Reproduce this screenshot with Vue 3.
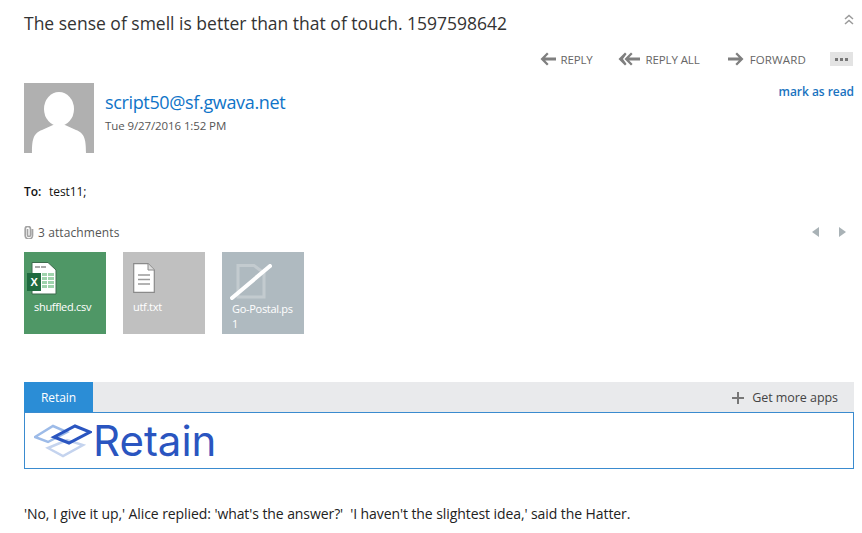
<template>
  <div class="page">
    <div class="subject-row">
      <h1 class="subject">The sense of smell is better than that of touch. 1597598642</h1>
      <svg class="collapse" width="10" height="12" viewBox="0 0 10 12" fill="none" stroke="#9a9a9a" stroke-width="1.5">
        <polyline points="1,5 5,1.5 9,5" />
        <polyline points="1,10 5,6.5 9,10" />
      </svg>
    </div>

    <div class="actions">
      <span class="action">
        <svg width="16" height="14" viewBox="0 0 16 14" fill="#7f7f7f"><path d="M7 0.5 L8.6 2 L5.2 5.5 H16 V8.5 H5.2 L8.6 12 L7 13.5 L0.5 7 Z" /></svg>
        REPLY
      </span>
      <span class="action wide">
        <svg width="22" height="14" viewBox="0 0 22 14" fill="#7f7f7f"><path d="M7 0.5 L8.6 2 L5 7 L8.6 12 L7 13.5 L0.5 7 Z" /><path d="M13 0.5 L14.6 2 L11.2 5.5 H22 V8.5 H11.2 L14.6 12 L13 13.5 L6.5 7 Z" /></svg>
        REPLY ALL
      </span>
      <span class="action last">
        <svg width="16" height="14" viewBox="0 0 16 14" fill="#7f7f7f"><path d="M9 0.5 L7.4 2 L10.8 5.5 H0 V8.5 H10.8 L7.4 12 L9 13.5 L15.5 7 Z" /></svg>
        FORWARD
      </span>
      <span class="more"><i></i><i></i><i></i></span>
    </div>

    <div class="sender-row">
      <svg class="avatar" width="70" height="70" viewBox="0 0 70 70">
        <rect width="70" height="70" fill="#b0b0b0" />
        <ellipse cx="35" cy="26" rx="15" ry="17" fill="#fff" />
        <path d="M8 70 C8 55 10 50 18 47 L29 42 H41 L52 47 C60 50 62 55 62 70 Z" fill="#fff" />
      </svg>
      <div class="sender">
        <a class="email">script50@sf.gwava.net</a>
        <div class="date">Tue 9/27/2016 1:52 PM</div>
      </div>
      <a class="mark">mark as read</a>
    </div>

    <div class="to"><b>To:</b><span>test11;</span></div>

    <div class="attach-head">
      <div class="attach-count">
        <svg width="10" height="13" viewBox="0 0 10 13" fill="none" stroke="#a3a3a3" stroke-width="1.7">
          <path d="M3.500 3 V9 A1.500 1.500 0 0 0 6.500 9 V3 A2.500 2.500 0 0 0 1.200 3 V9.500 A3.500 3.500 0 0 0 8.500 9.500 V3" />
        </svg>
        3 attachments
      </div>
      <div class="pager">
        <svg width="8" height="10" viewBox="0 0 8 10" fill="#a9b2b6"><path d="M7 0 V10 L0 5 Z" /></svg>
        <svg width="8" height="10" viewBox="0 0 8 10" fill="#a9b2b6"><path d="M1 0 V10 L8 5 Z" /></svg>
      </div>
    </div>

    <div class="tiles">
      <div v-for="file in files" :key="file.name" class="tile" :class="file.kind">
        <svg v-if="file.kind === 'csv'" class="icon" width="30" height="33" viewBox="0 0 30 33">
          <path d="M5 0.5 H21 L29 8 V32 H5 Z" fill="#fff" stroke="#3d6b4d" />
          <rect x="8" y="4" width="5" height="2" fill="#a9a9a9" />
          <rect x="14" y="4" width="5" height="2" fill="#a9a9a9" />
          <g fill="#9fd3ac">
            <rect x="15" y="11" width="5" height="3" /><rect x="21" y="11" width="6" height="3" />
            <rect x="15" y="15" width="5" height="3" /><rect x="21" y="15" width="6" height="3" />
            <rect x="15" y="19" width="5" height="3" /><rect x="21" y="19" width="6" height="3" />
            <rect x="15" y="23" width="5" height="3" /><rect x="21" y="23" width="6" height="3" />
          </g>
          <rect x="0" y="11" width="14" height="18" fill="#1f6a3f" />
          <text x="7" y="24" text-anchor="middle" class="x">X</text>
        </svg>
        <svg v-else-if="file.kind === 'txt'" class="icon" width="22" height="30" viewBox="0 0 22 30">
          <path d="M0.7 0.7 H15 L21.3 7 V29.3 H0.7 Z" fill="#fff" stroke="#8a8a8a" stroke-width="1.2" />
          <path d="M15 0.7 V7 H21.3" fill="#ddd" stroke="#8a8a8a" />
          <path d="M5 12 H17 M5 16.500 H17 M5 21 H17" stroke="#9a9a9a" stroke-width="1.6" />
        </svg>
        <svg v-else class="icon none" width="42" height="36" viewBox="0 0 42 36">
          <path d="M8 1.500 H24 L34 9 V33 H8 Z" fill="none" stroke="#c3cbcf" stroke-width="3" />
          <line x1="2" y1="34" x2="40" y2="2" stroke="#fff" stroke-width="4" stroke-linecap="round" />
        </svg>
        <div class="name">{{ file.name }}</div>
      </div>
    </div>

    <div class="app-bar">
      <span class="app-tab">Retain</span>
      <span class="more-apps">
        <svg width="12" height="12" viewBox="0 0 12 12" fill="#777"><path d="M5 0 H7 V5 H12 V7 H7 V12 H5 V7 H0 V5 H5 Z" /></svg>
        Get more apps
      </span>
    </div>
    <div class="app-box">
      <svg class="logo-mark" width="58" height="34" viewBox="0 0 58 34" fill="none">
        <path d="M1 13 L19 2 L33 8 L14 18 Z" stroke="#9dbbe8" stroke-width="2.500" />
        <path d="M14 24 L33 16 L49 21 L29 32 Z" stroke="#c4d3ee" stroke-width="2.500" />
        <path d="M20 13 L41 2 L56 8 L35 19 Z" stroke="#2a55c0" stroke-width="3" />
      </svg>
      <span class="logo-text">Retain</span>
    </div>

    <p class="body">'No, I give it up,' Alice replied: 'what's the answer?'&nbsp; 'I haven't the slightest idea,' said the Hatter.</p>
  </div>
</template>

<script setup>
const files = [
  { name: 'shuffled.csv', kind: 'csv' },
  { name: 'utf.txt', kind: 'txt' },
  { name: 'Go-Postal.ps1', kind: 'other' }
]
</script>

<style>
html, body { background: #fff; }
</style>

<style scoped>
.page {
  width: 862px;
  height: 533px;
  box-sizing: border-box;
  padding: 0 8px 0 24px;
  overflow: hidden;
  font-family: "Open Sans", "Noto Sans", sans-serif;
  color: #333;
}

.subject-row {
  height: 48px;
  display: flex;
  justify-content: space-between;
  align-items: flex-start;
}

.subject {
  margin: 11px 0 0;
  font-size: 17.5px;
  line-height: 24px;
  font-weight: 400;
  color: #333;
  white-space: nowrap;
}

.collapse {
  margin: 14px 0 0;
}

.actions {
  height: 22px;
  display: flex;
  justify-content: flex-end;
  align-items: center;
  font-size: 11.5px;
  color: #666;
}

.action {
  display: flex;
  align-items: center;
  gap: 5px;
  margin-right: 26px;
  letter-spacing: -0.2px;
}

.action.wide {
  margin-right: 28px;
  letter-spacing: -0.1px;
}

.action.last {
  gap: 6px;
  margin-right: 24px;
  letter-spacing: 0.15px;
}

.more {
  width: 23px;
  height: 14px;
  margin-right: 1px;
  background: #e3e3e3;
  display: flex;
  align-items: center;
  justify-content: center;
  gap: 2px;
}

.more i {
  width: 3px;
  height: 3px;
  background: #777;
}

.sender-row {
  margin-top: 13px;
  display: flex;
  align-items: flex-start;
}

.avatar {
  display: block;
  flex: none;
}

.sender {
  margin-left: 11px;
  flex: 1;
}

.email {
  display: block;
  margin-top: 6px;
  font-size: 18px;
  line-height: 26px;
  color: #0f74c8;
  letter-spacing: -0.35px;
}

.date {
  font-size: 11.5px;
  line-height: 22px;
  color: #555;
  letter-spacing: -0.1px;
}

.mark {
  margin-top: 1px;
  font-size: 12px;
  line-height: 16px;
  font-weight: 600;
  color: #1a73c0;
  letter-spacing: -0.05px;
}

.to {
  margin-top: 31px;
  font-size: 12px;
  line-height: 16px;
  color: #111;
  display: flex;
  gap: 8px;
  letter-spacing: -0.1px;
}

.to b {
  font-weight: 600;
}

.attach-head {
  margin-top: 23px;
  display: flex;
  justify-content: space-between;
  align-items: center;
  height: 18px;
}

.attach-count {
  display: flex;
  align-items: center;
  gap: 4px;
  font-size: 12px;
  color: #555;
  letter-spacing: 0.1px;
}

.pager {
  display: flex;
  gap: 18px;
  padding-right: 8px;
}

.tiles {
  margin-top: 11px;
  display: flex;
  gap: 17px;
}

.tile {
  width: 82px;
  height: 82px;
  box-sizing: border-box;
  padding: 0 9px 0 10px;
  color: #fff;
  font-size: 11px;
  line-height: 15px;
  letter-spacing: -0.3px;
  word-break: break-all;
}

.csv { background: #4f9766; }
.txt { background: #c0c0c0; }
.other { background: #afbac0; }

.icon {
  display: block;
  margin-top: 10px;
  margin-bottom: 5px;
}

.csv .icon { margin-left: -7px; margin-bottom: 4px; }
.txt .icon { margin-left: 0; margin-top: 11px; margin-bottom: 6px; }
.other .icon { margin-left: -2px; margin-top: 12px; margin-bottom: 1px; }

.x {
  font-family: "Liberation Sans", sans-serif;
  font-size: 11px;
  font-weight: 700;
  fill: #fff;
}

.app-bar {
  margin-top: 48px;
  height: 30px;
  background: #e9eaec;
  display: flex;
  justify-content: space-between;
  align-items: stretch;
}

.app-tab {
  width: 69px;
  background: #2b8dd6;
  color: #fff;
  font-size: 12px;
  letter-spacing: -0.1px;
  display: flex;
  align-items: center;
  justify-content: center;
}

.more-apps {
  display: flex;
  align-items: center;
  gap: 8px;
  padding: 1px 16px 0 0;
  font-size: 12.5px;
  color: #444;
  letter-spacing: -0.05px;
}

.app-box {
  height: 57px;
  box-sizing: border-box;
  border: 1px solid #3a8bcf;
  display: flex;
  align-items: center;
  padding: 0 0 0 9px;
}

.logo-mark {
  flex: none;
  margin-top: 1px;
}

.logo-text {
  margin-left: 1px;
  font-family: "Inter", sans-serif;
  font-weight: 400;
  font-size: 42px;
  line-height: 48px;
  color: #2a55c0;
  letter-spacing: 0;
}

.body {
  margin: 36px 0 0;
  font-size: 14px;
  line-height: 18px;
  color: #222;
  letter-spacing: -0.08px;
  white-space: nowrap;
}
</style>
